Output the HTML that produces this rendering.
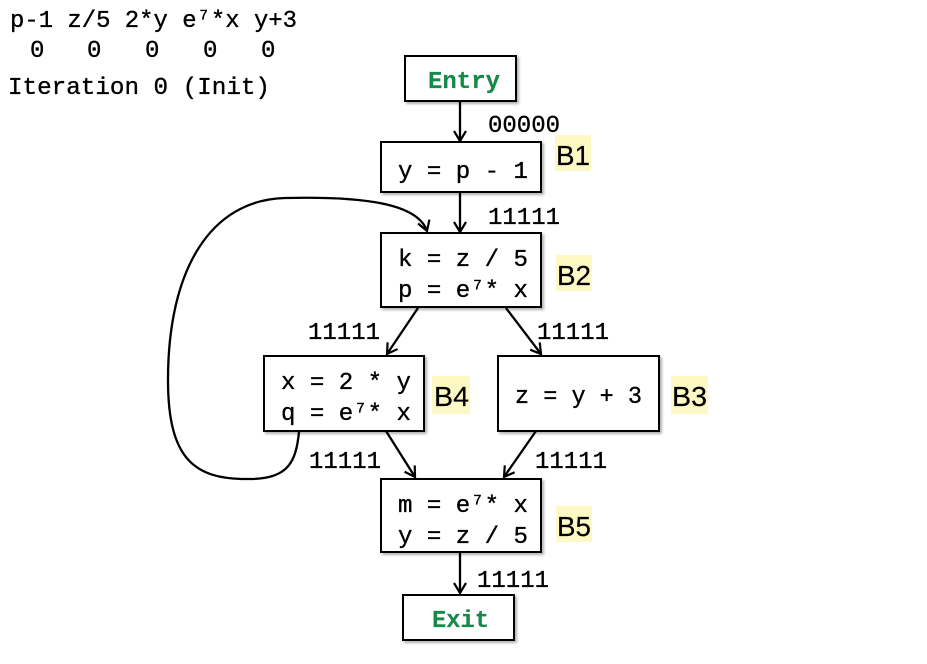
<!DOCTYPE html>
<html><head><meta charset="utf-8"><style>
html,body{margin:0;padding:0;background:#fff;}
svg{display:block}
text{font-family:"Liberation Mono",monospace;font-size:24px;fill:#000;stroke:#000;stroke-width:0.35}
.lab{font-family:"Liberation Sans",sans-serif;font-size:28px;stroke-width:0.2}
.g{fill:#178a4a;stroke:#178a4a;font-weight:bold;stroke-width:0.2}
</style></head><body>
<svg width="927" height="664" viewBox="0 0 927 664" xmlns="http://www.w3.org/2000/svg">
<defs>
<marker id="a" markerWidth="14" markerHeight="14" refX="12" refY="7" orient="auto" markerUnits="userSpaceOnUse">
<path d="M2,1 L12,7 L2,13" fill="none" stroke="#000" stroke-width="2.2"/>
</marker>
<filter id="s" x="-10%" y="-10%" width="130%" height="130%"><feDropShadow dx="2" dy="2" stdDeviation="1.2" flood-color="#000" flood-opacity="0.3"/></filter>
</defs>
<text x="10" y="27" textLength="287" lengthAdjust="spacingAndGlyphs">p-1 z/5 2*y e⁷*x y+3</text>
<text x="30" y="57">0</text><text x="87" y="57">0</text><text x="145" y="57">0</text><text x="203" y="57">0</text><text x="261" y="57">0</text>
<text x="8" y="94" textLength="262" lengthAdjust="spacingAndGlyphs">Iteration 0 (Init)</text>

<g fill="#fff" stroke="#000" stroke-width="2" filter="url(#s)">
<rect x="405" y="56" width="111" height="45"/>
<rect x="381" y="142" width="160" height="50"/>
<rect x="381" y="233" width="160" height="74"/>
<rect x="264" y="356" width="160" height="75"/>
<rect x="498" y="356" width="161" height="75"/>
<rect x="381" y="479" width="160" height="73"/>
<rect x="403" y="595" width="111" height="45"/>
</g>
<text x="428" y="88" class="g" textLength="72" lengthAdjust="spacingAndGlyphs">Entry</text>
<text x="432" y="627" class="g" textLength="57" lengthAdjust="spacingAndGlyphs">Exit</text>
<text x="398" y="178" textLength="130" lengthAdjust="spacingAndGlyphs">y = p - 1</text>
<text x="398" y="266" textLength="130" lengthAdjust="spacingAndGlyphs">k = z / 5</text>
<text x="398" y="297" textLength="130" lengthAdjust="spacingAndGlyphs">p = e⁷* x</text>
<text x="281" y="389" textLength="130" lengthAdjust="spacingAndGlyphs">x = 2 * y</text>
<text x="281" y="420" textLength="130" lengthAdjust="spacingAndGlyphs">q = e⁷* x</text>
<text x="515" y="403" textLength="127" lengthAdjust="spacingAndGlyphs">z = y + 3</text>
<text x="398" y="512" textLength="130" lengthAdjust="spacingAndGlyphs">m = e⁷* x</text>
<text x="398" y="543" textLength="130" lengthAdjust="spacingAndGlyphs">y = z / 5</text>

<g fill="#fdf9c4">
<rect x="555" y="135" width="36" height="36"/>
<rect x="556" y="255" width="36" height="36"/>
<rect x="432" y="376" width="38" height="38"/>
<rect x="671" y="376" width="37" height="38"/>
<rect x="556" y="506" width="36" height="36"/>
</g>
<text class="lab" x="556" y="165" textLength="34" lengthAdjust="spacingAndGlyphs">B1</text>
<text class="lab" x="557" y="285" textLength="34" lengthAdjust="spacingAndGlyphs">B2</text>
<text class="lab" x="434" y="406" textLength="35" lengthAdjust="spacingAndGlyphs">B4</text>
<text class="lab" x="672" y="406" textLength="35" lengthAdjust="spacingAndGlyphs">B3</text>
<text class="lab" x="557" y="536" textLength="34" lengthAdjust="spacingAndGlyphs">B5</text>

<text x="488" y="132" textLength="72" lengthAdjust="spacingAndGlyphs">00000</text>
<text x="488" y="224" textLength="72" lengthAdjust="spacingAndGlyphs">11111</text>
<text x="308" y="339" textLength="72" lengthAdjust="spacingAndGlyphs">11111</text>
<text x="537" y="339" textLength="72" lengthAdjust="spacingAndGlyphs">11111</text>
<text x="309" y="468" textLength="72" lengthAdjust="spacingAndGlyphs">11111</text>
<text x="535" y="468" textLength="72" lengthAdjust="spacingAndGlyphs">11111</text>
<text x="477" y="587" textLength="72" lengthAdjust="spacingAndGlyphs">11111</text>

<g stroke="#000" stroke-width="2.3" fill="none" marker-end="url(#a)">
<line x1="460" y1="101" x2="460" y2="141"/>
<line x1="460" y1="192" x2="460" y2="232"/>
<line x1="418" y1="308" x2="387" y2="354"/>
<line x1="506" y1="308" x2="541" y2="354"/>
<line x1="386" y1="431" x2="415" y2="477"/>
<line x1="536" y1="431" x2="504" y2="477"/>
<line x1="460" y1="552" x2="460" y2="593"/>
<path d="M299,432 C296,462 288,479 250,479 C195,480 168,460 168,380 C168,270 210,200 285,198 C370,196 418,205 427,231"/>
</g>
</svg>
</body></html>
